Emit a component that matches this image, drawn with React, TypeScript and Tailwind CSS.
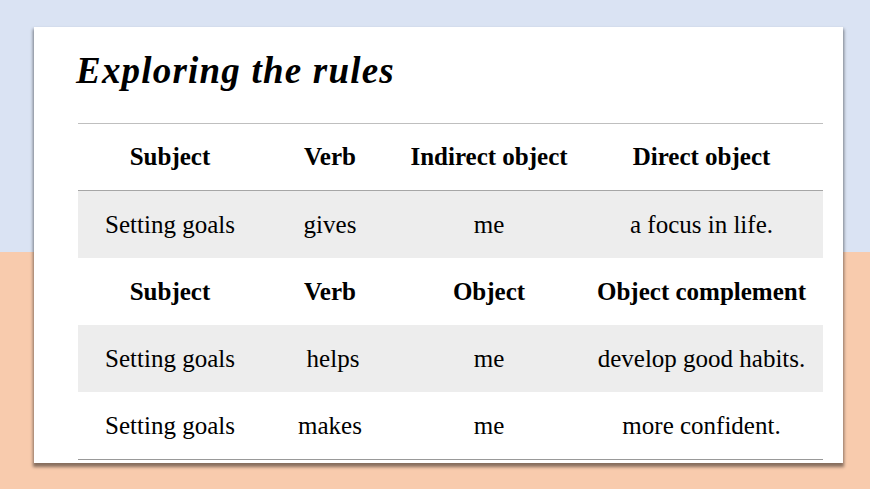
const rows1 = [["Setting goals", "gives", "me", "a focus in life."]]
const rows2 = [
  ["Setting goals", "helps", "me", "develop good habits."],
  ["Setting goals", "makes", "me", "more confident."],
]

const cols = "grid grid-cols-[184px_136px_182px_243px]"

function HeadRow({ cells, border }: { cells: string[]; border?: boolean }) {
  return (
    <div className={`${cols} h-[67px] items-center font-bold ${border ? "border-b border-[#a6a6a6]" : ""}`}>
      {cells.map((c) => (
        <div key={c} className="text-center">
          {c}
        </div>
      ))}
    </div>
  )
}

function Row({ cells, shaded }: { cells: string[]; shaded?: boolean }) {
  return (
    <div className={`${cols} h-[67px] items-center ${shaded ? "bg-[#ededed]" : ""}`}>
      {cells.map((c, i) => (
        <div key={i} className={`text-center ${c === "helps" ? "pl-[6px]" : ""}`}>
          {c}
        </div>
      ))}
    </div>
  )
}

export default function App() {
  return (
    <div className="relative w-[870px] h-[489px] overflow-hidden flex flex-col">
      <div className="h-[252px] bg-[#dae3f3]" />
      <div className="flex-1 bg-[#f8cbad]" />
      {/* card sits over the two-tone backdrop */}
      <div className="absolute left-[34px] top-[27px] w-[809px] h-[436px] bg-white shadow-[0_3px_3px_1px_rgba(0,0,0,0.45)] font-['Liberation_Serif',serif] text-black">
        <h1 className="ml-[42px] mt-[21px] text-[37px] leading-[46px] font-bold italic tracking-[1.2px]">
          Exploring the rules
        </h1>
        <div className="ml-[44px] mt-[29px] w-[745px] text-[25px] border-t border-[#bfbfbf] border-b border-b-[#999]">
          <HeadRow cells={["Subject", "Verb", "Indirect object", "Direct object"]} border />
          {rows1.map((r, i) => (
            <Row key={i} cells={r} shaded />
          ))}
          <HeadRow cells={["Subject", "Verb", "Object", "Object complement"]} />
          {rows2.map((r, i) => (
            <Row key={i} cells={r} shaded={i === 0} />
          ))}
        </div>
      </div>
    </div>
  )
}
